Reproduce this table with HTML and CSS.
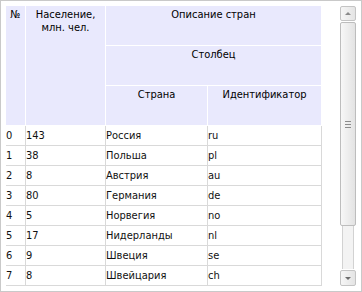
FILE: index.html
```html
<!DOCTYPE html>
<html lang="ru">
<head>
<meta charset="utf-8">
<title>Таблица</title>
<link rel="stylesheet" href="styles.css">
</head>
<body>
<div class="frame">
  <div class="grid">
    <div class="head">
      <div class="hc h-num">№</div>
      <div class="hc h-pop">Население, млн. чел.</div>
      <div class="hc h-desc">Описание стран</div>
      <div class="hc h-col">Столбец</div>
      <div class="hc h-country">Страна</div>
      <div class="hc h-id">Идентификатор</div>
    </div>
    <div class="row"><div class="c">0</div><div class="c">143</div><div class="c">Россия</div><div class="c">ru</div></div>
    <div class="row"><div class="c">1</div><div class="c">38</div><div class="c">Польша</div><div class="c">pl</div></div>
    <div class="row"><div class="c">2</div><div class="c">8</div><div class="c">Австрия</div><div class="c">au</div></div>
    <div class="row"><div class="c">3</div><div class="c">80</div><div class="c">Германия</div><div class="c">de</div></div>
    <div class="row"><div class="c">4</div><div class="c">5</div><div class="c">Норвегия</div><div class="c">no</div></div>
    <div class="row"><div class="c">5</div><div class="c">17</div><div class="c">Нидерланды</div><div class="c">nl</div></div>
    <div class="row"><div class="c">6</div><div class="c">9</div><div class="c">Швеция</div><div class="c">se</div></div>
    <div class="row"><div class="c">7</div><div class="c">8</div><div class="c">Швейцария</div><div class="c">ch</div></div>
  </div>
  <div class="scrollbar">
    <div class="sb-btn"><span class="arrow-up"></span></div>
    <div class="sb-track">
      <div class="sb-thumb"><span class="grip"></span></div>
      <div class="sb-rail"></div>
    </div>
    <div class="sb-btn down"><span class="arrow-down"></span></div>
  </div>
</div>
</body>
</html>
```
FILE: styles.css
```css
html, body {
  margin: 0;
  padding: 0;
  background: #ffffff;
}

.frame {
  box-sizing: border-box;
  width: 362px;
  height: 292px;
  border: 1px solid #c9c9c9;
  padding: 5px;
  display: flex;
  justify-content: space-between;
  font-family: "DejaVu Sans Condensed", "DejaVu Sans", sans-serif;
  font-size: 11px;
  color: #000;
}

.grid {
  width: 316px;
  display: flex;
  flex-direction: column;
}

.head {
  display: grid;
  grid-template-columns: 20px 80px 102px 114px;
  grid-template-rows: 40px 40px 40px;
  background: #e9e9fd;
}

.hc {
  box-sizing: border-box;
  border-right: 1px solid #ffffff;
  border-bottom: 1px solid #ffffff;
  text-align: center;
  line-height: 13px;
  padding-top: 2px;
}

.h-num { grid-column: 1; grid-row: 1 / 4; }
.h-pop { grid-column: 2; grid-row: 1 / 4; padding: 2px 8px 0; }
.h-desc { grid-column: 3 / 5; grid-row: 1; }
.h-col { grid-column: 3 / 5; grid-row: 2; }
.h-country { grid-column: 3; grid-row: 3; }
.h-id { grid-column: 4; grid-row: 3; }

.row {
  display: grid;
  grid-template-columns: 20px 80px 102px 114px;
  height: 20px;
}

.c {
  box-sizing: border-box;
  border-right: 1px solid #d9d9d9;
  border-bottom: 1px solid #d9d9d9;
  line-height: 19px;
  padding-left: 0;
  white-space: nowrap;
  color: #111;
}

.scrollbar {
  width: 16px;
  display: flex;
  flex-direction: column;
}

.sb-btn {
  box-sizing: border-box;
  height: 15px;
  border: 1px solid #c4c4c4;
  border-radius: 2px;
  background: linear-gradient(to right, #f6f6f6, #e4e4e4);
  display: flex;
  align-items: center;
  justify-content: center;
}

.sb-btn.down {
  height: 16px;
}

.arrow-up {
  width: 0;
  height: 0;
  border-left: 3px solid transparent;
  border-right: 3px solid transparent;
  border-bottom: 3px solid #8a8a8a;
}

.arrow-down {
  width: 0;
  height: 0;
  border-left: 3px solid transparent;
  border-right: 3px solid transparent;
  border-top: 3px solid #6c6c6c;
}

.sb-track {
  flex: 1;
  display: flex;
  flex-direction: column;
  padding: 1px 0;
}

.sb-thumb {
  box-sizing: border-box;
  height: 204px;
  border: 1px solid #bdbdbd;
  border-radius: 2px;
  background: linear-gradient(to right, #f7f7f7, #e3e3e3);
  display: flex;
  align-items: center;
  justify-content: center;
}

.grip {
  width: 6px;
  height: 7px;
  background: repeating-linear-gradient(to bottom, #8c8c8c 0, #8c8c8c 1px, transparent 1px, transparent 3px);
}

.sb-rail {
  flex: 1;
  margin: 0 2px;
  border-left: 1px solid #d2d2d2;
  border-right: 1px solid #d2d2d2;
  background: #f3f3f3;
}
```
